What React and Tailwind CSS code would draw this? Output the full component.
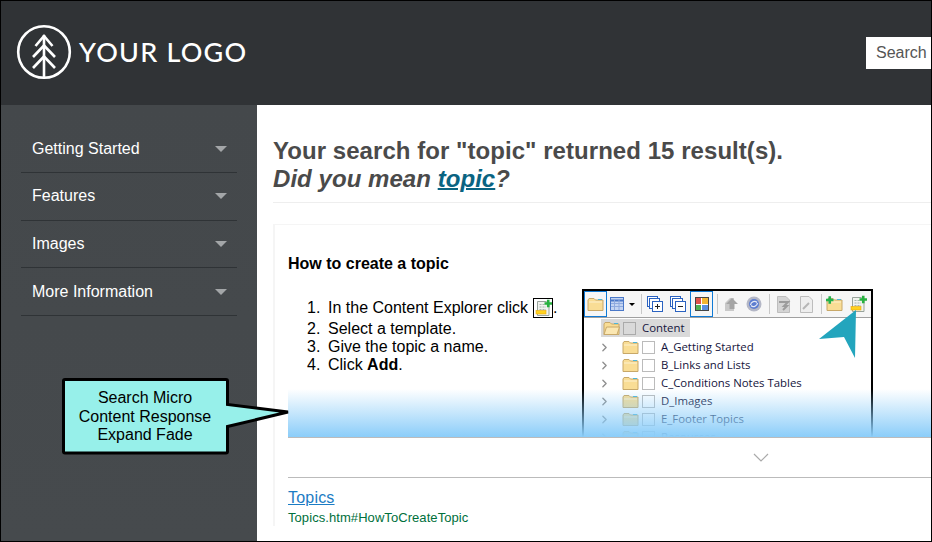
import React from 'react';
import { ChevronRight } from 'lucide-react';

const navItems = ['Getting Started', 'Features', 'Images', 'More Information'];
const steps = ['Select a template.', 'Give the topic a name.'];
const treeRows = ['A_Getting Started', 'B_Links and Lists', 'C_Conditions Notes Tables', 'D_Images', 'E_Footer Topics', 'Resources'];

function TreeLogo() {
  return (
    <svg width="56" height="56" viewBox="0 0 56 56" fill="none" stroke="white" className="-mt-[2px] shrink-0">
      <circle cx="28" cy="28" r="25.8" strokeWidth="2.6" />
      <path d="M28 11V54" strokeWidth="2.6" />
      <path d="M19.5 22L28 12L36.5 22M17 33L28 21.500L39 33M17 44L28 32.500L39 44" strokeWidth="2.6" />
    </svg>
  );
}

function Folder({ open, plus }) {
  return (
    <svg width="17" height="15" viewBox="0 0 17 15" className="overflow-visible">
      <path d="M1 13.500V3L2 1.500H7L8.500 3H16V13.500Z" fill="#f9dd95" stroke="#c8a868" />
      {open && <path d="M1 13.500L3.500 6H16.500L14 13.500Z" fill="#fbe7b2" stroke="#c8a868" />}
      {!open && <path d="M2 5H15" stroke="#fdf1cf" />}
      <path d="M11 2.500H15" stroke="#4db6d8" />
      {plus && <path d="M0 3H7.500M3.750 -.75V6.750" stroke="#22b14c" strokeWidth="2.600" />}
    </svg>
  );
}

function NewTopicIcon({ size = 17 }) {
  return (
    <svg width={size} height={size} viewBox="0 0 17 17" className="overflow-visible">
      <path d="M2.500 1.500H11L14 4V15.500H2.500Z" fill="#f1f3ee" stroke="#98a39b" />
      <path d="M4.500 4.500H10M4.500 7H11M4.500 9.500H11" stroke="#a8b5ac" strokeDasharray="2 1" />
      <path d="M9.500 3.500H17M13.250 -.25V7.250" stroke="#27b13f" strokeWidth="2.600" />
      <rect x="1" y="10.500" width="10" height="3.500" fill="#ffd21f" stroke="#e7a90d" strokeWidth=".6" />
    </svg>
  );
}

function GridIcon() {
  return (
    <svg width="14" height="14" viewBox="0 0 14 14" className="ml-[3px]">
      <rect x=".5" y=".5" width="13" height="13" fill="#c3d4f2" stroke="#4a78c8" />
      <path d="M1 3.500H13" stroke="#4a78c8" strokeWidth="2" />
      <path d="M1 6.500H13M1 9.500H13M4.500 3V13M9 3V13" stroke="#8eaadf" />
    </svg>
  );
}

function StackIcon({ sign }) {
  return (
    <svg width="16" height="16" viewBox="0 0 16 16" fill="white" stroke="#2a62c0">
      <rect x=".5" y=".5" width="10" height="10" />
      <rect x="2.500" y="2.500" width="10" height="10" />
      <rect x="5.500" y="5.500" width="10" height="10" />
      <path d={sign === '+' ? 'M8 10.500H13M10.500 8V13' : 'M8 10.500H13'} stroke="#222" />
    </svg>
  );
}

function GreyIcon({ round }) {
  if (round) {
    return (
      <svg width="16" height="16" viewBox="0 0 16 16">
        <circle cx="8" cy="8" r="7.500" fill="#b4b7c6" />
        <circle cx="8" cy="8" r="5" fill="#5d7dd0" />
        <path d="M4.500 9C5 5.500 9 4.500 11 6.500M11.500 7C11 10.500 7 11.500 5 9.500" fill="none" stroke="#e4e8f3" strokeWidth="1.300" />
      </svg>
    );
  }
  return (
    <svg width="16" height="16" viewBox="0 0 16 16">
      <path d="M2 15V7L7 2H11V15Z" fill="#c9c9c9" />
      <path d="M9 2L15 8H11.500V13H6.500V8H3Z" fill="#a5a5a5" />
    </svg>
  );
}

function GreyDoc({ wrench }) {
  return (
    <svg width="15" height="17" viewBox="0 0 15 17">
      <path d="M1.500 .5H10L13.500 4V16.500H1.500Z" fill={wrench ? '#eee' : '#d4d4d4'} stroke="#bdbdbd" />
      {wrench
        ? <path d="M4 13L10 7" stroke="#b5b5b5" strokeWidth="2" />
        : <path d="M3 6H12L8 10H11L7 14" fill="none" stroke="#9c9c9c" strokeWidth="2" />}
    </svg>
  );
}

function Separator() {
  return <div className="h-[20px] w-px bg-[#c8c8c8]" />;
}

function ContentExplorerShot() {
  return (
    <div className="relative h-[160px] w-[291px] shrink-0 border-2 border-b-0 border-black bg-white">
      <div className="flex h-[27px] items-center border-b border-[#a0a0a0] bg-[#f6f6f6]">
        <div className="flex h-[26px] w-[23px] items-center justify-center border border-[#0f7ad6]"><Folder /></div>
        <GridIcon />
        <div className="ml-[5px] mr-[6px] h-0 w-0 border-x-[3px] border-t-[3px] border-x-transparent border-t-black" />
        <Separator />
        <div className="ml-[5px]"><StackIcon sign="+" /></div>
        <div className="ml-[7px]"><StackIcon sign="-" /></div>
        <div className="ml-[4px] flex h-[26px] w-[23px] items-center justify-center border border-[#0f7ad6]">
          <div className="grid h-[14px] w-[14px] grid-cols-2 gap-px border border-[#444] bg-white">
            <div className="bg-[#e0524a]" />
            <div className="bg-[#f2b632]" />
            <div className="bg-[#4fb04f]" />
            <div className="bg-[#5a8fe0]" />
          </div>
        </div>
        <div className="ml-[4px]"><Separator /></div>
        <div className="ml-[5px]"><GreyIcon /></div>
        <div className="ml-[7px]"><GreyIcon round /></div>
        <div className="ml-[7px]"><Separator /></div>
        <div className="ml-[6px]"><GreyDoc /></div>
        <div className="ml-[8px]"><GreyDoc wrench /></div>
        <div className="ml-[7px]"><Separator /></div>
        <div className="ml-[4px]"><Folder plus /></div>
        <div className="ml-[7px]"><NewTopicIcon /></div>
      </div>
      <div className="pl-[17px] pt-px font-['Open_Sans',sans-serif] text-[11.400px] text-[#14143c]">
        <div className="mb-px flex h-[18px] w-[89px] items-center gap-[3px] bg-[#d9d9d9] pl-[2px]">
          <Folder open />
          <div className="h-[13px] w-[13px] border border-[#aaa] bg-[#d9d9d9]" />
          <span className="ml-[3px]">Content</span>
        </div>
        {treeRows.map((row) => (
          <div key={row} className="flex h-[18px] items-center whitespace-nowrap">
            <ChevronRight size={13} strokeWidth={2.5} className="-ml-[3px] mr-[11px] text-[#8f8f8f]" />
            <Folder />
            <div className="ml-[3px] mr-[6px] h-[13px] w-[13px] border border-[#bbb] bg-white" />
            <span>{row}</span>
          </div>
        ))}
      </div>
      <svg width="40" height="50" viewBox="0 0 40 50" className="absolute left-[234px] top-[17px]">
        <path d="M38 2L1 31L26 29L37 50Z" fill="#23a5bd" />
      </svg>
    </div>
  );
}

export default function App() {
  return (
    <div className="relative flex h-[542px] w-[932px] flex-col overflow-hidden border border-black bg-white font-['Liberation_Sans',Arial,sans-serif]">
      <header className="flex h-[104px] shrink-0 items-center bg-[#303336] pl-[15px]">
        <TreeLogo />
        <span className="-mt-[2px] ml-[7px] font-['Lato',sans-serif] text-[27px] font-medium tracking-[1.2px] text-white">YOUR LOGO</span>
        <div className="ml-auto flex h-[32px] w-[65px] items-center bg-white pl-[10px] text-[16px] text-[#555]">Search</div>
      </header>

      <div className="flex min-h-0 flex-1">
        <aside className="w-[256px] shrink-0 bg-gradient-to-b from-[#44484b] to-[#464a4d] px-[20px] pt-[20.400px]">
          {navItems.map((item) => (
            <div key={item} className="flex h-[47.700px] items-center justify-between border-b border-[#2f3336] px-[11px] pr-[10px] text-[16px] text-white">
              <span>{item}</span>
              <div className="h-0 w-0 border-x-[6px] border-t-[6px] border-x-transparent border-t-[#a3a6a8]" />
            </div>
          ))}
        </aside>

        <main className="min-w-0 flex-1 pl-[16px]">
          <div className="border-b border-[#eeeeee] pb-[9px] pt-[32px] text-[24px] font-bold leading-[28px] tracking-[0.05px] text-[#4a4a4a]">
            <div>Your search for "topic" returned 15 result(s).</div>
            <div className="italic">Did you mean <a className="text-[#0a6482] underline decoration-2">topic</a>?</div>
          </div>

          <div className="mt-[21px] border-l-2 border-t border-[#f5f5f5] pl-[13px]">
            <h3 className="pt-[29px] text-[16px] font-bold leading-[20px] text-black">How to create a topic</h3>

            <div className="relative mt-[15px] h-[149px] overflow-hidden border-b border-[#bbbbbb]">
              <div className="flex">
                <ol className="w-[294px] shrink-0 pl-[19px] pt-[9px] text-[16px] leading-[18px] text-black">
                  <li className="mb-[2px] flex items-center">
                    <span className="w-[21px]">1.</span>
                    In the Content Explorer click
                    <span className="ml-[5px] flex h-[20px] w-[20px] items-center justify-center border border-black"><NewTopicIcon /></span>.
                  </li>
                  {steps.map((step, i) => (
                    <li key={step} className="flex">
                      <span className="w-[21px]">{i + 2}.</span>
                      {step}
                    </li>
                  ))}
                  <li className="flex">
                    <span className="w-[21px]">4.</span>
                    <span>Click <b>Add</b>.</span>
                  </li>
                </ol>
                <ContentExplorerShot />
              </div>
              <div className="absolute inset-x-0 bottom-0 h-[48px] bg-gradient-to-b from-[#8bcdf9]/0 to-[#8bcdf9]" />
            </div>

            <div className="flex h-[40px] items-center border-b border-[#bbbbbb] pl-[465px]">
              <svg width="16" height="9" viewBox="0 0 16 9" fill="none" stroke="#aaaaaa">
                <path d="M1 1L8 8L15 1" strokeWidth="1.200" />
              </svg>
            </div>

            <a className="mt-[10px] block text-[16px] leading-[20px] tracking-[0.2px] text-[#1b7cc4] underline">Topics</a>
            <div className="mt-[2px] text-[13px] leading-[16px] tracking-[0.07px] text-[#00703c]">Topics.htm#HowToCreateTopic</div>
          </div>
        </main>
      </div>

      <div className="absolute left-[60px] top-[376px] h-[80px] w-[230px]">
        <svg width="230" height="80" viewBox="0 0 230 80" className="absolute inset-0">
          <path d="M4 2.500H165Q166.500 2.500 166.500 4V27.500L227 35L166.500 49.500V74.500Q166.500 76 165 76H4Q2.500 76 2.500 74.500V4Q2.500 2.500 4 2.500Z" fill="#97f0ea" stroke="black" strokeWidth="3" />
        </svg>
        <div className="relative w-[168px] pt-[12px] text-center text-[16px] leading-[18.500px] text-black">
          Search Micro<br />Content Response<br />Expand Fade
        </div>
      </div>
    </div>
  );
}
